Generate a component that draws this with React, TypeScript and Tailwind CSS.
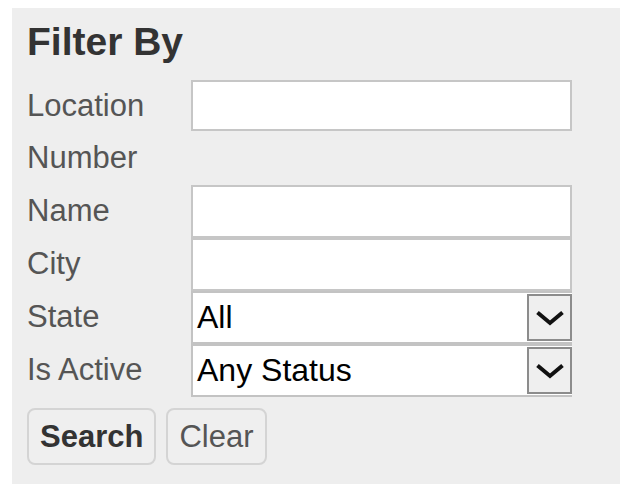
import React from "react";

function Chevron() {
  return (
    <svg width="30" height="18" viewBox="0 0 30 18" className="block">
      <polyline
        points="2.5,3.5 15,14 27.5,3.5"
        fill="none"
        stroke="#111"
        strokeWidth="4"
        strokeLinecap="butt"
        strokeLinejoin="miter"
      />
    </svg>
  );
}

function SelectBox({ value }: { value: string }) {
  return (
    <div className="flex h-[53px] w-[381px] items-stretch border-2 border-r-0 border-[#c3c3c3] bg-white">
      <span className="flex-1 pl-[4px] text-[32px] leading-[49px] text-black">{value}</span>
      <span className="my-[1px] flex w-[45px] items-center justify-center border-2 border-[#8c8c8c] bg-[#efefef]">
        <Chevron />
      </span>
    </div>
  );
}

function TextBox({ tall = true }: { tall?: boolean }) {
  return (
    <input
      type="text"
      className={
        (tall ? "h-[53px] " : "h-[51px] ") +
        "block w-[381px] border-2 border-[#c6c6c6] bg-white px-[4px] text-[31px] outline-none"
      }
    />
  );
}

function Label({ children }: { children: React.ReactNode }) {
  return <div className="w-[164px] shrink-0 text-[31px] leading-[52px] text-[#555]">{children}</div>;
}

export default function App() {
  return (
    <div className="min-h-[484px] bg-white pl-[12px] pt-[8px] font-[family-name:Liberation_Sans,Arial,sans-serif]">
      <div className="min-h-[476px] bg-[#eeeeee] pl-[15px] pt-[12px]">
        <h2 className="text-[39px] font-bold leading-[44px] text-[#333]">Filter By</h2>

        <div className="mt-[16px] flex flex-col">
          <div className="flex h-[105px] items-start">
            <Label>Location Number</Label>
            <TextBox tall={false} />
          </div>
          <div className="flex h-[53px] items-start">
            <Label>Name</Label>
            <TextBox />
          </div>
          <div className="flex h-[53px] items-start">
            <Label>City</Label>
            <TextBox />
          </div>
          <div className="flex h-[53px] items-start">
            <Label>State</Label>
            <SelectBox value="All" />
          </div>
          <div className="flex h-[53px] items-start">
            <Label>Is Active</Label>
            <SelectBox value="Any Status" />
          </div>
        </div>

        <div className="mt-[11px] flex gap-[10px]">
          <button className="h-[57px] rounded-[8px] border-2 border-[#d4d4d4] bg-[#efefef] px-[11px] text-[31px] font-bold leading-[53px] text-[#333]">
            Search
          </button>
          <button className="h-[57px] rounded-[8px] border-2 border-[#d4d4d4] bg-[#efefef] px-[11px] text-[31px] leading-[53px] text-[#555]">
            Clear
          </button>
        </div>
      </div>
    </div>
  );
}
